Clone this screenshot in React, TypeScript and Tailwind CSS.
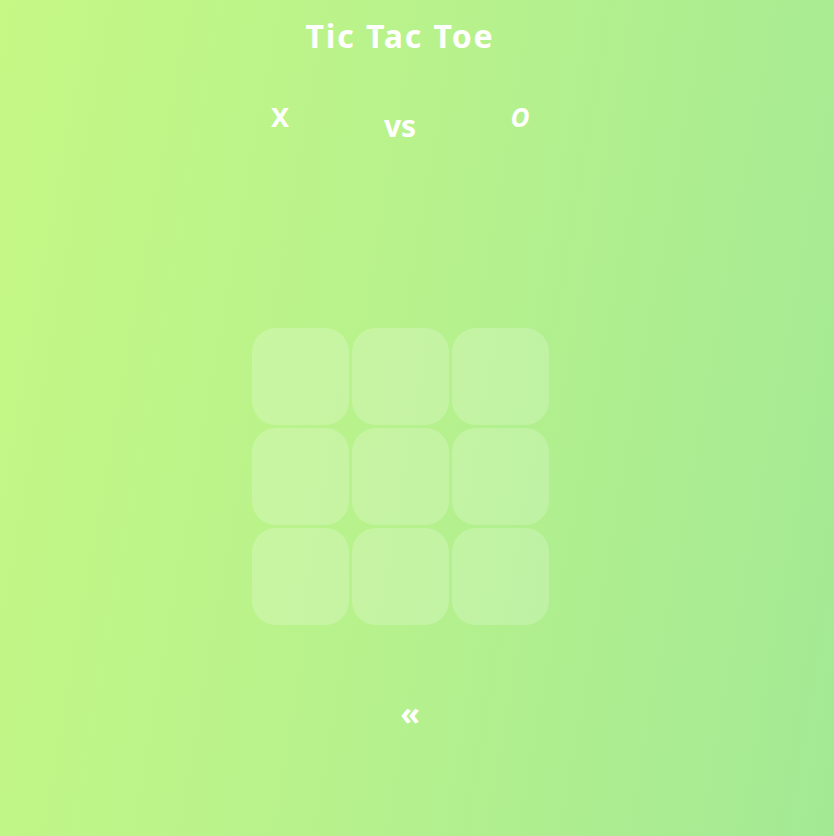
const CELLS = Array.from({ length: 9 }, (_, i) => i)

export default function App() {
  return (
    <div className="min-h-[836px] w-full bg-[linear-gradient(100deg,#c5f885_0%,#b8f28c_45%,#a3e994_100%)] font-['Comic_Sans_MS','Noto_Sans',sans-serif] text-white">
      <div className="flex w-[800px] flex-col items-center">
        <h1 className="mt-[14px] text-[32px] font-bold leading-[44px] tracking-[0.06em]">Tic Tac Toe</h1>

        <div className="mt-[40px] flex w-[280px] items-start justify-between font-bold">
          <span className="w-[40px] text-center text-[27px] leading-[38px]">X</span>
          <span className="mt-[8px] w-[40px] text-center text-[30px] leading-[40px]">vs</span>
          <span className="w-[40px] text-center text-[26px] italic leading-[38px]">O</span>
        </div>

        <div className="mt-[182px] grid grid-cols-[97px_97px_97px] gap-[3px]">
          {CELLS.map((c) => (
            <button key={c} className="h-[97px] w-[97px] rounded-[24px] bg-white/20" />
          ))}
        </div>

        <button className="ml-[20px] mt-[70px] text-[32px] font-bold leading-[36px]">«</button>
      </div>
    </div>
  )
}
